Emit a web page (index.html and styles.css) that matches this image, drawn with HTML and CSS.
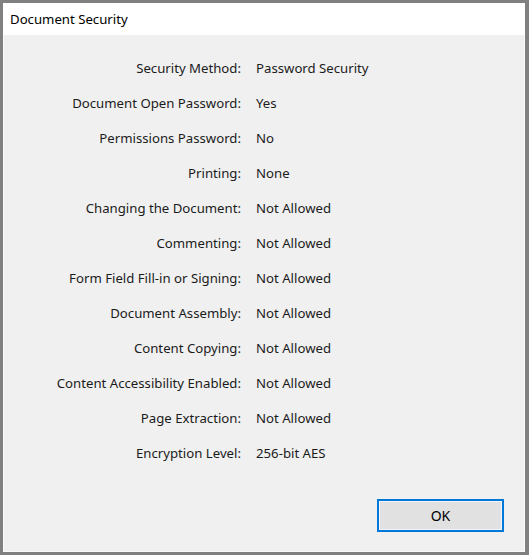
FILE: index.html
```html
<!DOCTYPE html>
<html>
<head>
<meta charset="utf-8">
<link rel="stylesheet" href="styles.css">
</head>
<body>
<div class="window">
  <div class="titlebar">Document Security</div>
  <div class="content">
    <div class="grid">
      <div class="label">Security Method:</div><div class="value">Password Security</div>
      <div class="label">Document Open Password:</div><div class="value">Yes</div>
      <div class="label">Permissions Password:</div><div class="value">No</div>
      <div class="label">Printing:</div><div class="value">None</div>
      <div class="label">Changing the Document:</div><div class="value">Not Allowed</div>
      <div class="label">Commenting:</div><div class="value">Not Allowed</div>
      <div class="label">Form Field Fill-in or Signing:</div><div class="value">Not Allowed</div>
      <div class="label">Document Assembly:</div><div class="value">Not Allowed</div>
      <div class="label">Content Copying:</div><div class="value">Not Allowed</div>
      <div class="label">Content Accessibility Enabled:</div><div class="value">Not Allowed</div>
      <div class="label">Page Extraction:</div><div class="value">Not Allowed</div>
      <div class="label">Encryption Level:</div><div class="value">256-bit AES</div>
    </div>
    <div class="footer">
      <button class="ok">OK</button>
    </div>
  </div>
</div>
</body>
</html>
```
FILE: styles.css
```css
html, body {
  margin: 0;
  padding: 0;
}
body {
  background: #808080;
  width: 529px;
  height: 555px;
  box-sizing: border-box;
  padding: 3px 4px 3px 3px;
  font-family: "Noto Sans", "Open Sans", sans-serif;
  font-size: 13.2px;
  color: #1b1b1b;
}
.window {
  width: 522px;
  height: 549px;
  display: flex;
  flex-direction: column;
  background: #f0f0f0;
}
.titlebar {
  height: 32px;
  background: #ffffff;
  display: flex;
  align-items: center;
  padding-left: 7px;
  font-size: 13.2px;
  color: #000;
}
.content {
  flex: 1;
  display: flex;
  flex-direction: column;
  border: 1px solid #fafafa;
  border-top: none;
}
.grid {
  display: grid;
  grid-template-columns: 237px auto;
  column-gap: 15px;
  grid-auto-rows: 35px;
  padding-top: 15px;
}
.label {
  text-align: right;
  display: flex;
  align-items: center;
  justify-content: flex-end;
  white-space: nowrap;
}
.value {
  display: flex;
  align-items: center;
  white-space: nowrap;
}
.footer {
  display: flex;
  justify-content: flex-end;
  padding-right: 20px;
  margin-top: 29px;
}
.ok {
  width: 127px;
  height: 33px;
  background: #e1e1e1;
  border: 2px solid #0078d7;
  box-shadow: inset 0 0 0 1px #f0f6fc;
  font-family: inherit;
  font-size: 14px;
  color: #000;
  padding: 0;
}
```
